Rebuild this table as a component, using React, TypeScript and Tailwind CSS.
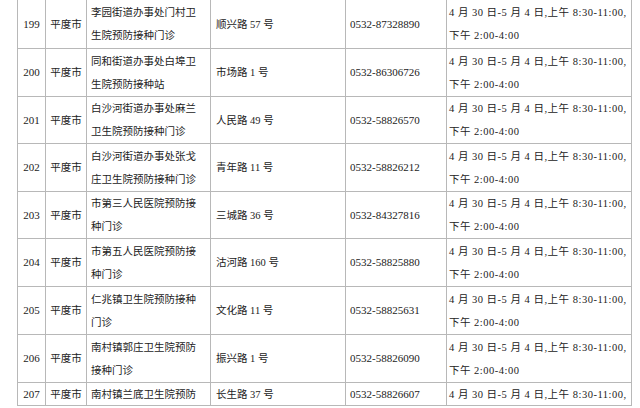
const rows = [
  { no: "199", name: ["李园街道办事处门村卫", "生院预防接种门诊"], addr: "顺兴路 57 号", tel: "0532-87328890", h: "h-[49px]" },
  { no: "200", name: ["同和街道办事处白埠卫", "生院预防接种站"], addr: "市场路 1 号", tel: "0532-86306726", h: "h-[48px]" },
  { no: "201", name: ["白沙河街道办事处麻兰", "卫生院预防接种门诊"], addr: "人民路 49 号", tel: "0532-58826570", h: "h-[47px]" },
  { no: "202", name: ["白沙河街道办事处张戈", "庄卫生院预防接种门诊"], addr: "青年路 11 号", tel: "0532-58826212", h: "h-[48px]" },
  { no: "203", name: ["市第三人民医院预防接", "种门诊"], addr: "三城路 36 号", tel: "0532-84327816", h: "h-[47px]" },
  { no: "204", name: ["市第五人民医院预防接", "种门诊"], addr: "沽河路 160 号", tel: "0532-58825880", h: "h-[48px]" },
  { no: "205", name: ["仁兆镇卫生院预防接种", "门诊"], addr: "文化路 11 号", tel: "0532-58825631", h: "h-[48px]" },
  { no: "206", name: ["南村镇郭庄卫生院预防", "接种门诊"], addr: "振兴路 1 号", tel: "0532-58826090", h: "h-[48px]" },
  { no: "207", name: ["南村镇兰底卫生院预防"], addr: "长生路 37 号", tel: "0532-58826607", h: "h-[23px]", last: true },
];

const cell = "border-r border-[#b8b8b8] flex items-center";

export default function App() {
  return (
    <div
      className="w-[640px] h-[408px] bg-white overflow-hidden text-[#222] text-[10.5px] leading-[23px]"
      style={{ fontFamily: '"Liberation Serif", "Noto Sans CJK SC", serif' }}
    >
      <div className="ml-[17px] w-[615px] border-l border-[#b8b8b8]">
        {rows.map((r) => (
          <div
            key={r.no}
            className={`grid grid-cols-[28px_41px_124px_135px_101px_185px] border-b border-[#b8b8b8] ${r.h}`}
          >
            <div className={`${cell} justify-center text-[11px]`}>{r.no}</div>
            <div className={`${cell} justify-center`}>平度市</div>
            <div className={`${cell} pl-1`}>
              <div className="whitespace-nowrap">
                {r.name.map((l, i) => (
                  <div key={i}>{l}</div>
                ))}
              </div>
            </div>
            <div className={`${cell} pl-[5px] whitespace-nowrap`}>{r.addr}</div>
            <div className={`${cell} pl-1 text-[11px]`}>{r.tel}</div>
            <div className={`${cell} pl-[2px] whitespace-nowrap tracking-[0.5px]`}>
              <div>
                <div>4 月 30 日-5 月 4 日,上午 8:30-11:00,</div>
                {!r.last && <div>下午 2:00-4:00</div>}
              </div>
            </div>
          </div>
        ))}
      </div>
    </div>
  );
}
